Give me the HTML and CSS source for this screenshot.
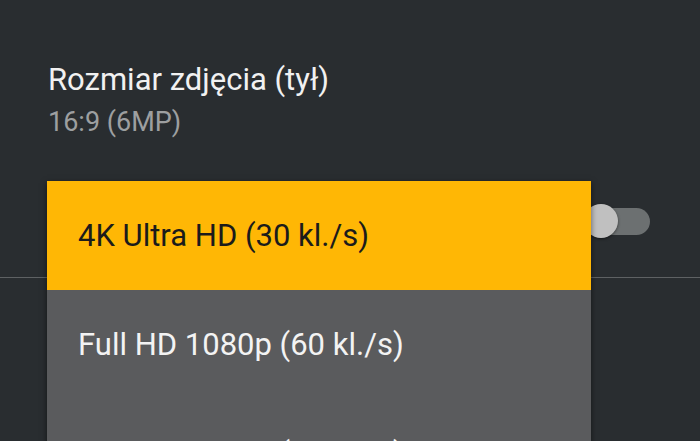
FILE: index.html
```html
<!DOCTYPE html>
<html lang="pl">
<head>
<meta charset="utf-8">
<title>Ustawienia aparatu</title>
<link rel="stylesheet" href="styles.css">
</head>
<body>
<div class="screen">
  <div class="pref">
    <div class="pref-title">Rozmiar zdjęcia (tył)</div>
    <div class="pref-summary">16:9 (6MP)</div>
  </div>
  <div class="pref-row">
    <div class="switch">
      <div class="track"></div>
      <div class="thumb"></div>
    </div>
  </div>
  <div class="divider"></div>

  <div class="menu">
    <div class="menu-item selected">4K Ultra HD (30 kl./s)</div>
    <div class="menu-item">Full HD 1080p (60 kl./s)</div>
    <div class="menu-item">Full HD 1080p (30 kl./s)</div>
  </div>
</div>
</body>
</html>
```

FILE: styles.css
```css
html, body {
  margin: 0;
  padding: 0;
}
body {
  background: #292d30;
  font-family: Roboto, "Noto Sans", "Liberation Sans", sans-serif;
  width: 700px;
  height: 441px;
  overflow: hidden;
}
.screen {
  position: relative;
  width: 700px;
  height: 441px;
  overflow: hidden;
}
.pref {
  padding: 62px 0 0 48px;
}
.pref-title {
  color: #f1f1f1;
  font-size: 31px;
  line-height: 36px;
}
.pref-summary {
  margin-top: 8px;
  color: #9d9fa0;
  font-size: 27px;
  line-height: 32px;
}
.pref-row {
  display: flex;
  justify-content: flex-end;
  padding: 66px 50px 0 0;
  height: 73px;
}
.switch {
  position: relative;
  width: 66px;
  height: 34px;
}
.track {
  position: absolute;
  right: 0;
  top: 4px;
  width: 60px;
  height: 27px;
  border-radius: 14px;
  background: #6c7071;
}
.thumb {
  position: absolute;
  left: 0;
  top: 0;
  width: 34px;
  height: 34px;
  border-radius: 50%;
  background: #c0c0c0;
  box-shadow: 0 1px 3px rgba(0,0,0,0.5);
}
.divider {
  height: 1px;
  background: #5e6163;
}
.menu {
  position: absolute;
  left: 47px;
  top: 181px;
  width: 544px;
  box-shadow: 0 2px 6px rgba(0,0,0,0.55);
}
.menu-item {
  height: 109px;
  display: flex;
  align-items: center;
  padding-left: 31px;
  font-size: 31px;
  color: #f3f3f3;
  background: #5a5b5d;
}
.menu-item.selected {
  background: #ffb705;
  color: #1b1b1b;
}
```
